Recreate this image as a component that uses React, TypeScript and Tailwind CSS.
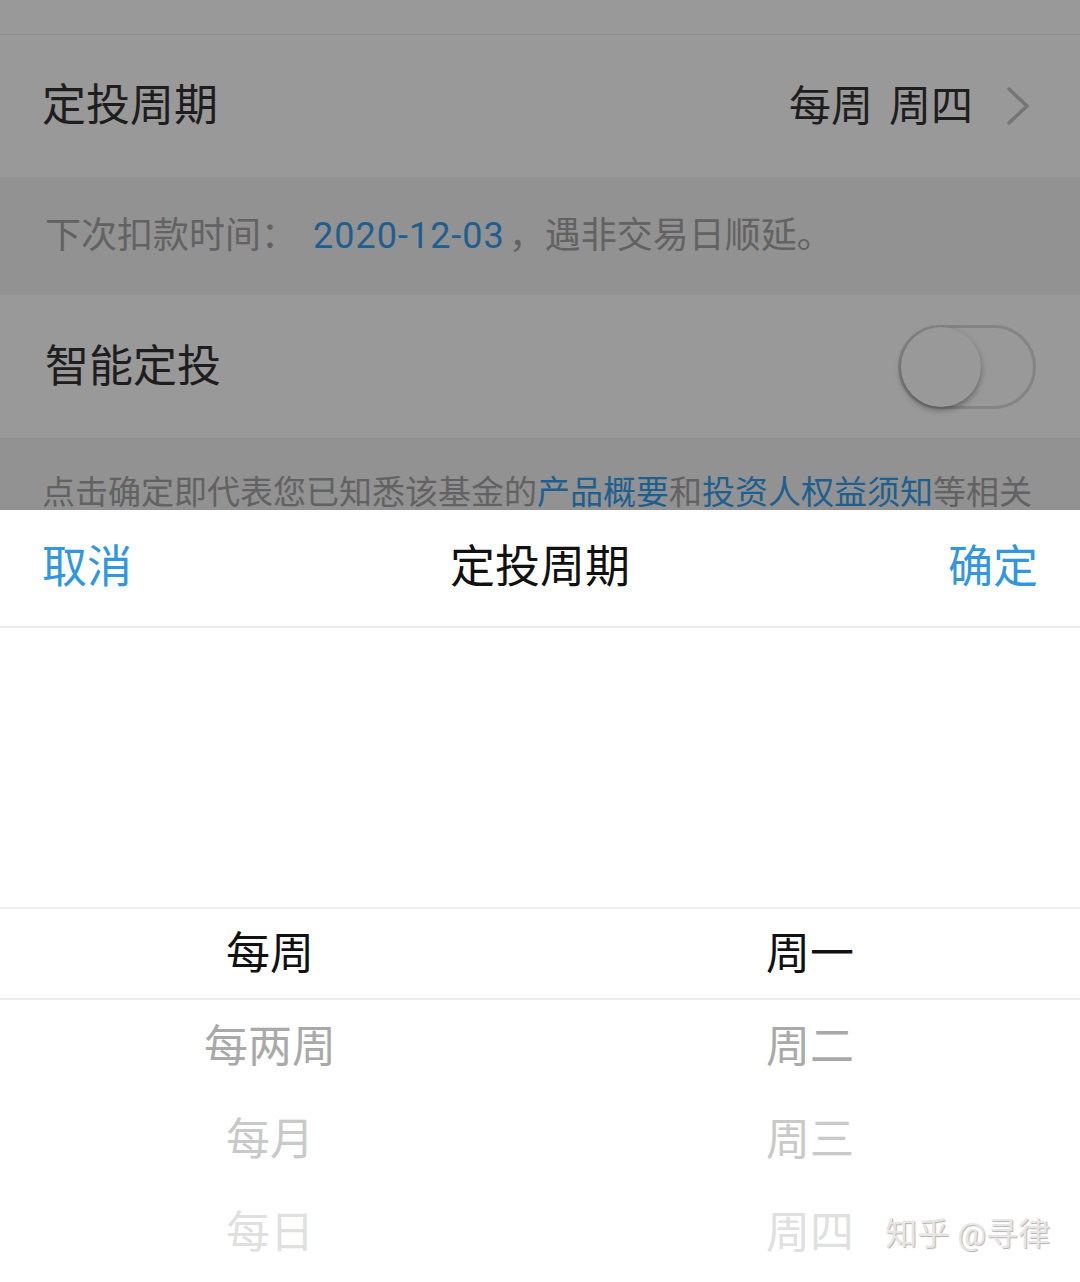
import React from 'react';

const rows = [
  { left: '每周', right: '周一', color: 'text-[#111111]' },
  { left: '每两周', right: '周二', color: 'text-[#a9a9a9]' },
  { left: '每月', right: '周三', color: 'text-[#c9c9c9]' },
  { left: '每日', right: '周四', color: 'text-[#e0e0e0]' },
];

export default function App() {
  return (
    <div className="relative h-[1282px] w-[1080px] overflow-hidden bg-white font-['Roboto','Noto_Sans_CJK_SC',sans-serif]">
      {/* Page behind the sheet */}
      <div className="h-[35px] border-b border-[#ececec]" />

      <div className="flex h-[142px] items-center justify-between pl-[42px] pr-[50px]">
        <span className="text-[44px] text-[#333333]">定投周期</span>
        <div className="flex items-center gap-[33px]">
          <div className="flex gap-[16px] text-[42px] text-[#333333]">
            <span>每周</span>
            <span>周四</span>
          </div>
          <svg width="24" height="40" viewBox="0 0 24 40" fill="none">
            <path d="M3 3 L21 20 L3 37" stroke="#c4c4c4" strokeWidth="3.5" strokeLinecap="round" strokeLinejoin="round" />
          </svg>
        </div>
      </div>

      <div className="flex h-[118px] items-center bg-[#f4f4f4] pl-[45px] text-[36px] text-[#a3a3a3]">
        <span>下次扣款时间：</span>
        <span className="ml-[16px] tracking-[1px] text-[#349fef]">2020-12-03</span>
        <span className="ml-[4px]">，遇非交易日顺延。</span>
      </div>

      <div className="flex h-[143px] items-center justify-between pl-[45px] pr-[44px]">
        <span className="text-[44px] text-[#333333]">智能定投</span>
        <div className="flex h-[84px] w-[138px] items-center rounded-full border-[3px] border-[#dcdcdc] bg-white">
          <div className="h-[80px] w-[80px] rounded-full bg-white shadow-[0_3px_6px_rgba(0,0,0,0.35)]" />
        </div>
      </div>

      <div className="h-[200px] overflow-hidden whitespace-nowrap bg-[#f4f4f4] px-[42px] pt-[31px] text-[33px] leading-[48px] text-[#a3a3a3]">
        <span>点击确定即代表您已知悉该基金的</span>
        <span className="text-[#349fef]">产品概要</span>
        <span>和</span>
        <span className="text-[#349fef]">投资人权益须知</span>
        <span>等相关</span>
      </div>

      {/* Dim overlay */}
      <div className="absolute inset-0 bg-black/40" />

      {/* Picker sheet */}
      <div className="absolute inset-x-0 bottom-0 h-[772px] bg-white">
        <div className="flex h-[118px] items-center justify-between border-b-2 border-[#ebebeb] px-[42px] text-[45px]">
          <span className="text-[#3296e0]">取消</span>
          <span className="text-[#111111]">定投周期</span>
          <span className="text-[#3296e0]">确定</span>
        </div>

        <div className="h-[279px]" />

        <div className="text-[44px]">
          {rows.map((r, i) => (
            <div
              key={r.left}
              className={`grid h-[93px] grid-cols-2 items-center text-center ${r.color} ${
                i === 0 ? 'border-y-2 border-[#ececec]' : ''
              }`}
            >
              <span>{r.left}</span>
              <span>{r.right}</span>
            </div>
          ))}
        </div>

        <div className="absolute right-[30px] bottom-[24px] text-[32px] text-[#e6e6e6] [text-shadow:1px_1px_1px_rgba(0,0,0,0.3)]">
          知乎 @寻律
        </div>
      </div>
    </div>
  );
}
